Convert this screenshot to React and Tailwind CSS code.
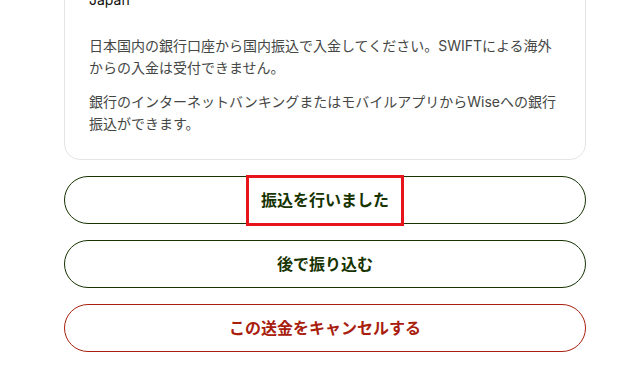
import React from 'react';

const font = { fontFamily: '"Inter", "Noto Sans CJK JP", sans-serif' };

function PillButton({ children, tone = 'green', highlight = false }) {
  const toneCls =
    tone === 'red'
      ? 'border-[#a8200d] text-[#a8200d]'
      : 'border-[#163300] text-[#163300]';
  return (
    <button
      className={`h-12 w-full rounded-full border bg-white text-base font-bold flex items-center justify-center ${toneCls}`}
    >
      <span className="relative leading-6">
        {children}
        {highlight && (
          <span className="absolute -left-[15px] -right-[15px] -top-[13px] -bottom-[14px] border-[3px] border-[#e8141c]" />
        )}
      </span>
    </button>
  );
}

export default function App() {
  return (
    <div className="min-h-screen bg-white overflow-hidden" style={font}>
      <div className="ml-[64px] w-[522px] -mt-[36px] flex flex-col gap-4">
        <div className="rounded-2xl border border-[#e4e6e4] px-6 py-6 text-sm leading-[22px] text-[#454745]">
          <div className="mb-6 text-[#0e0f0c]">Japan</div>
          <p className="mb-3">
            日本国内の銀行口座から国内振込で入金してください。SWIFTによる海外からの入金は受付できません。
          </p>
          <p>
            銀行のインターネットバンキングまたはモバイルアプリからWiseへの銀行振込ができます。
          </p>
        </div>
        <PillButton highlight>振込を行いました</PillButton>
        <PillButton>後で振り込む</PillButton>
        <PillButton tone="red">この送金をキャンセルする</PillButton>
      </div>
    </div>
  );
}
